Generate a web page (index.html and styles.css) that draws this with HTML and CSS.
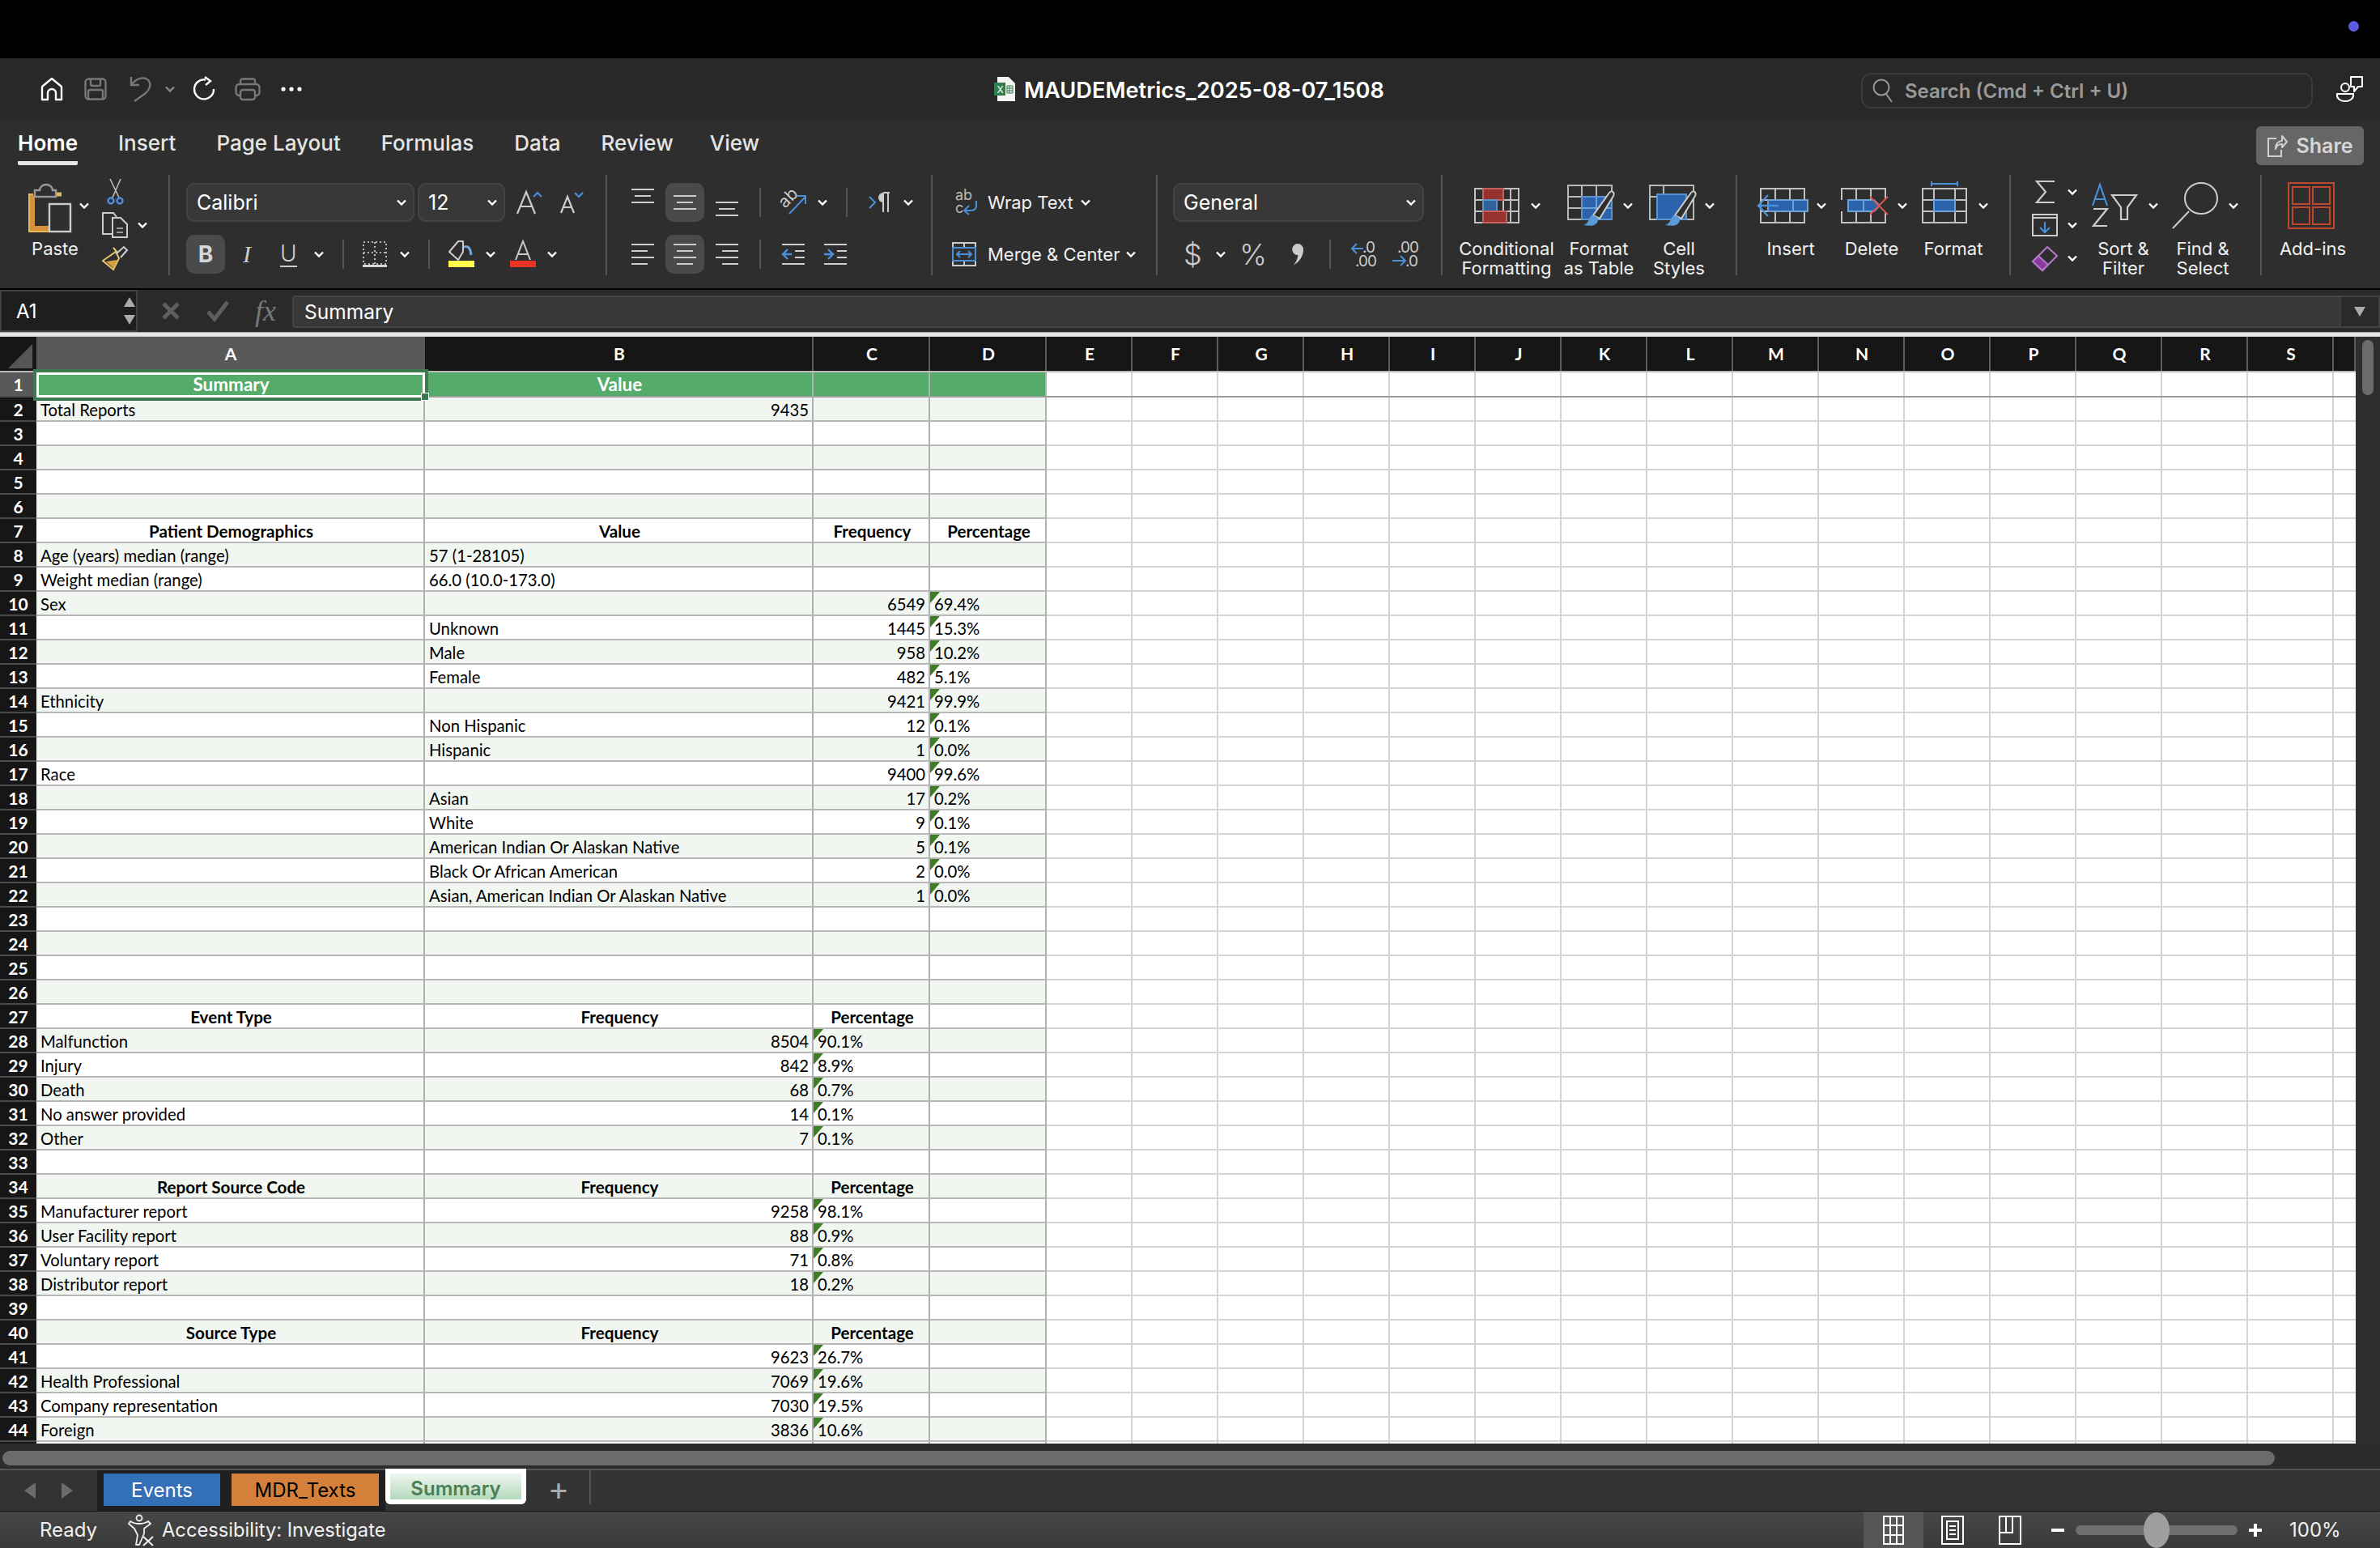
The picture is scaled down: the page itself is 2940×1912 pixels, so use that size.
FILE: index.html
```html
<!DOCTYPE html>
<html lang="en">
<head>
    <meta charset="UTF-8">
    <title>MAUDEMetrics_2025-08-07_1508</title>
    <link rel="stylesheet" href="styles.css">
</head>
<body>
    <svg class="sprite" width="0" height="0">
        <symbol id="chev" viewBox="0 0 12 8"><path d="M1 1.5 L6 6.5 L11 1.5" fill="none" stroke="#fff" stroke-width="2.4"/></symbol>
    </svg>

    <div class="topbar"><span class="dot"></span></div>

    <div class="titlebar">
        <div class="quick">
            <svg class="ml-50" width="28" height="30" viewBox="0 0 28 30"><path d="M2 28 V12 L14 2 L26 12 V28 H19 V20 a5 5 0 0 0 -10 0 V28 Z" fill="none" stroke="#fff" stroke-width="2.4" stroke-linejoin="round"/></svg>
            <svg class="ml-26" width="28" height="28" viewBox="0 0 28 28" fill="none" stroke="#777" stroke-width="2.4"><rect x="1.5" y="1.5" width="25" height="25" rx="4"/><path d="M8 2 V8 a2 2 0 0 0 2 2 H18 a2 2 0 0 0 2 -2 V2 M5 26 V17 a2 2 0 0 1 2 -2 H21 a2 2 0 0 1 2 2 V26"/></svg>
            <svg class="ml-28" width="28" height="32" viewBox="0 0 28 32" fill="none" stroke="#777" stroke-width="2.4"><path d="M2 1 V11 H12 M2 11 C8 3 18 -1 24 6 C28 12 24 17 20 21 L6 31"/></svg>
            <svg class="ml-16 chev-dim" width="12" height="8"><use href="#chev"/></svg>
            <svg class="ml-22" width="28" height="28" viewBox="0 0 28 28" fill="none" stroke="#fff" stroke-width="2.4"><path d="M26 14 A12 12 0 1 1 16 2.5 M15 -1 L22 4 L16 9"/></svg>
            <svg class="ml-24" width="32" height="28" viewBox="0 0 32 28" fill="none" stroke="#777" stroke-width="2.4"><path d="M7 8 V4 a2.5 2.5 0 0 1 2.5 -2.5 H22.5 a2.5 2.5 0 0 1 2.5 2.5 V8"/><rect x="1.5" y="8" width="29" height="14" rx="4"/><rect x="7" y="15" width="18" height="12" rx="3" fill="#282828"/></svg>
            <svg class="ml-25" width="26" height="6" viewBox="0 0 26 6" fill="#fff"><circle cx="3" cy="3" r="2.6"/><circle cx="13" cy="3" r="2.6"/><circle cx="23" cy="3" r="2.6"/></svg>
        </div>
        <svg width="26" height="30" viewBox="0 0 26 30"><path d="M4 0 H18 L26 8 V30 H4 Z" fill="#f4f4f4"/><rect x="0" y="7" width="14" height="16" fill="#2f7d4a"/><text x="3.5" y="20" class="xl-x">X</text><path d="M16 11 H23 V20 H16 Z M19 11 V20 M16 14 H23 M16 17 H23" fill="none" stroke="#2f7d4a" stroke-width="1"/></svg>
        <div class="doc-name">MAUDEMetrics_2025-08-07_1508</div>
        <div class="search">
            <svg width="26" height="30" viewBox="0 0 26 30" fill="none" stroke="#9a9a9a" stroke-width="2"><circle cx="11" cy="11" r="9.5"/><path d="M17 19 L24 29"/></svg>
            <span>Search (Cmd + Ctrl + U)</span>
        </div>
        <svg class="ml-29" width="34" height="32" viewBox="0 0 34 32" fill="none" stroke="#fff" stroke-width="2"><circle cx="11" cy="14" r="5"/><path d="M1 22 H21 V24 a10 7 0 0 1 -20 0 Z"/><path d="M18 1 H32 V13 H27 L22 19 V13 H18 Z" stroke-linejoin="round"/></svg>
    </div>

    <div class="ribbon">
        <div class="tabs">
            <span class="tab active">Home</span>
            <span class="tab">Insert</span>
            <span class="tab">Page Layout</span>
            <span class="tab">Formulas</span>
            <span class="tab">Data</span>
            <span class="tab">Review</span>
            <span class="tab tab-view">View</span>
            <div class="share">
                <svg width="26" height="30" viewBox="0 0 26 30" fill="none" stroke="#d0d0d0" stroke-width="2"><path d="M12 6 H2 V28 H18 V20"/><path d="M11 19 C11 12 15 9 19 9 V3 L25 10 L19 17 V13 C15 13 12 15 11 19 Z" stroke-linejoin="round"/></svg>
                <span>Share</span>
            </div>
        </div>
        <div class="groups">
            <!-- clipboard -->
            <div class="grp g-clip">
                <div class="big w-90 ml-23">
                    <div class="big-top">
                        <svg class="ml-11" width="54" height="64" viewBox="0 0 54 64" fill="none"><path d="M7 18 H2 V64 H26" stroke="#e9b75a" stroke-width="2"/><path d="M6 19 V60 H26" stroke="#d5903a" stroke-width="6"/><path d="M34 18 H42" stroke="#e9b75a" stroke-width="5"/><path d="M9 21 V13 H15 a8 7 0 0 1 16 0 H35 V21 Z" stroke="#999" stroke-width="2.4" fill="#2e2e2e"/><rect x="27" y="30" width="26" height="34" stroke="#ccc" stroke-width="2.4" fill="#2e2e2e"/></svg>
                        <svg class="ml-10" width="12" height="8"><use href="#chev"/></svg>
                    </div>
                    <div class="label">Paste</div>
                </div>
                <div class="stack">
                    <div class="s">
                        <svg class="ml-19" width="22" height="34" viewBox="0 0 22 34" fill="none" stroke="#bbb" stroke-width="1.6"><path d="M4 1 L15 24 M17 1 L7 24"/><circle cx="5" cy="28" r="3.5" stroke="#4a90d9" stroke-width="2.4"/><circle cx="16" cy="28" r="3.5" stroke="#4a90d9" stroke-width="2.4"/></svg>
                    </div>
                    <div class="s">
                        <svg class="ml-13" width="32" height="32" viewBox="0 0 32 32" fill="none" stroke="#ccc" stroke-width="2"><path d="M13 27 H1 V1 H14 L18 6"/><path d="M13 7 H23 L31 15 V31 H13 Z" fill="#2e2e2e"/><path d="M18 20 H26 M18 25 H26" stroke="#999"/></svg>
                        <svg class="ml-12" width="12" height="8"><use href="#chev"/></svg>
                    </div>
                    <div class="s">
                        <svg class="ml-13" width="32" height="30" viewBox="0 0 32 30" fill="none"><path d="M14 2 L19 8 M1 18 L17 7 L21 15 L14 29 Z" stroke="#e9c46a" stroke-width="2"/><path d="M5 19 L19 17 L14 27 Z" fill="#d5a040"/><path d="M18 9 L27 1 L31 5 L23 14" stroke="#ccc" stroke-width="2"/></svg>
                    </div>
                </div>
            </div>
            <!-- font -->
            <div class="grp g-font">
                <div class="r">
                    <div class="select ml-20 w-font"><span>Calibri</span><svg width="12" height="8"><use href="#chev"/></svg></div>
                    <div class="select ml-4 w-size"><span>12</span><svg width="12" height="8"><use href="#chev"/></svg></div>
                    <svg class="ml-14" width="32" height="30" viewBox="0 0 32 30" fill="none"><path d="M1 29 L12 2 L23 29 M5 20 H19" stroke="#ccc" stroke-width="2.2"/><path d="M21 8 L26 3 L31 8" stroke="#4a90d9" stroke-width="2.2"/></svg>
                    <svg class="ml-22" width="30" height="28" viewBox="0 0 30 28" fill="none"><path d="M1 27 L9 7 L17 27 M4 20 H14" stroke="#ccc" stroke-width="2.2"/><path d="M18 2 L23 7 L28 2" stroke="#4a90d9" stroke-width="2.2"/></svg>
                </div>
                <div class="r">
                    <div class="btn on ml-20 bold-b">B</div>
                    <span class="it-i ml-22">I</span>
                    <span class="un-u ml-34">U</span>
                    <svg class="ml-21" width="12" height="8"><use href="#chev"/></svg>
                    <span class="vsep ml-23"></span>
                    <svg class="ml-23" width="30" height="32" viewBox="0 0 30 32" fill="none"><rect x="1" y="1" width="28" height="27" stroke="#ddd" stroke-width="1.6" stroke-dasharray="2 3"/><path d="M15 1 V28 M1 14 H29" stroke="#ddd" stroke-width="1.6" stroke-dasharray="2 3"/><path d="M0 30.5 H30" stroke="#fff" stroke-width="2.4"/></svg>
                    <svg class="ml-16" width="12" height="8"><use href="#chev"/></svg>
                    <span class="vsep ml-23"></span>
                    <svg class="ml-23" width="32" height="34" viewBox="0 0 32 34" fill="none"><path d="M12 1 H18 V14 L12 24 L1 14 Z" stroke="#ccc" stroke-width="2" stroke-linejoin="round"/><path d="M19 8 C24 6 27 9 28 18" stroke="#6ea8dc" stroke-width="3"/><rect y="25" width="32" height="8" fill="#ffff4d"/></svg>
                    <svg class="ml-14" width="12" height="8"><use href="#chev"/></svg>
                    <svg class="ml-18" width="32" height="34" viewBox="0 0 32 34" fill="none"><path d="M7 24 L16 1 L25 24 M10 17 H22" stroke="#ccc" stroke-width="2"/><rect y="25" width="32" height="8" fill="#ea3323"/></svg>
                    <svg class="ml-14" width="12" height="8"><use href="#chev"/></svg>
                </div>
            </div>
            <!-- alignment -->
            <div class="grp g-align">
                <div class="r">
                    <svg class="ml-30 up" width="28" height="18" viewBox="0 0 28 18" stroke="#ccc" stroke-width="2"><path d="M0 1 H28 M4 9 H24 M0 17 H28"/></svg>
                    <div class="btn on ml-14"><svg width="28" height="18" viewBox="0 0 28 18" stroke="#ccc" stroke-width="2"><path d="M0 1 H28 M4 9 H24 M0 17 H28"/></svg></div>
                    <svg class="ml-14 down" width="28" height="18" viewBox="0 0 28 18" stroke="#ccc" stroke-width="2"><path d="M0 1 H28 M4 9 H24 M0 17 H28"/></svg>
                    <span class="vsep ml-26"></span>
                    <svg class="ml-24" width="32" height="32" viewBox="0 0 32 32" fill="none"><text x="0" y="18" class="ab" transform="rotate(-45 10 14)">ab</text><path d="M11 30 L30 10 M21 8 H31 V18" stroke="#4a90d9" stroke-width="2"/></svg>
                    <svg class="ml-14" width="12" height="8"><use href="#chev"/></svg>
                    <span class="vsep ml-23"></span>
                    <svg class="ml-26" width="26" height="30" viewBox="0 0 26 30" fill="none"><path d="M1 8 L8 15 L1 22" stroke="#4a90d9" stroke-width="2"/><path d="M18 3 H26 M18 3 V27 M24 3 V27" stroke="#ccc" stroke-width="2"/><path d="M18 3 a6 6 0 0 0 0 12 Z" fill="#ccc"/></svg>
                    <svg class="ml-17" width="12" height="8"><use href="#chev"/></svg>
                </div>
                <div class="r">
                    <svg class="ml-30" width="28" height="26" viewBox="0 0 28 26" stroke="#ccc" stroke-width="2"><path d="M0 1 H28 M0 9 H20 M0 17 H28 M0 25 H20"/></svg>
                    <div class="btn on ml-14"><svg width="28" height="26" viewBox="0 0 28 26" stroke="#ccc" stroke-width="2"><path d="M0 1 H28 M4 9 H24 M0 17 H28 M4 25 H24"/></svg></div>
                    <svg class="ml-14" width="28" height="26" viewBox="0 0 28 26" stroke="#ccc" stroke-width="2"><path d="M0 1 H28 M8 9 H28 M0 17 H28 M8 25 H28"/></svg>
                    <span class="vsep ml-26"></span>
                    <svg class="ml-26" width="28" height="26" viewBox="0 0 28 26" fill="none" stroke="#ccc" stroke-width="2"><path d="M0 1 H28 M16 9 H28 M16 17 H28 M0 25 H28"/><path d="M12 13 H1 M7 7 L1 13 L7 19" stroke="#4a90d9" stroke-width="2.4"/></svg>
                    <svg class="ml-24" width="28" height="26" viewBox="0 0 28 26" fill="none" stroke="#ccc" stroke-width="2"><path d="M0 1 H28 M16 9 H28 M16 17 H28 M0 25 H28"/><path d="M0 13 H11 M5 7 L11 13 L5 19" stroke="#4a90d9" stroke-width="2.4"/></svg>
                </div>
            </div>
            <!-- wrap / merge -->
            <div class="grp g-wrap">
                <div class="r">
                    <svg class="ml-28" width="28" height="32" viewBox="0 0 28 32" fill="none"><text x="0" y="13" class="wrap-t">ab</text><text x="0" y="29" class="wrap-t">c</text><path d="M26 14 V20 a6 6 0 0 1 -6 6 H12 M17 20 L11 26 L17 31" stroke="#4a90d9" stroke-width="2"/></svg>
                    <span class="txt ml-12">Wrap Text</span>
                    <svg class="ml-9" width="12" height="8"><use href="#chev"/></svg>
                </div>
                <div class="r">
                    <svg class="ml-24" width="30" height="30" viewBox="0 0 30 30" fill="none" stroke="#ccc" stroke-width="2"><path d="M1 7 V1 H29 V7 M1 23 V29 H29 V23 M15 1 V7 M15 23 V29"/><rect x="1" y="7" width="28" height="16" stroke="#4a90d9"/><path d="M6 15 H24 M10 11 L6 15 L10 19 M20 11 L24 15 L20 19" stroke="#4a90d9"/></svg>
                    <span class="txt ml-14">Merge &amp; Center</span>
                    <svg class="ml-8" width="12" height="8"><use href="#chev"/></svg>
                </div>
            </div>
            <!-- number -->
            <div class="grp g-num">
                <div class="r">
                    <div class="select ml-19 w-num"><span>General</span><svg width="12" height="8"><use href="#chev"/></svg></div>
                </div>
                <div class="r">
                    <span class="sym sym-d ml-32">$</span>
                    <svg class="ml-22" width="12" height="8"><use href="#chev"/></svg>
                    <span class="sym sym-p ml-17">%</span>
                    <svg class="ml-30" width="16" height="28" viewBox="0 0 16 28"><path d="M8 1 a7 7 0 0 1 7 7.5 c0 8 -5 15 -12 19 c3 -4 5 -8 5.500 -12.500 a7 7 0 0 1 -0.500 -14 Z" fill="#ccc"/></svg>
                    <span class="vsep ml-31"></span>
                    <svg class="ml-24" width="32" height="34" viewBox="0 0 32 34" fill="none"><text x="15" y="15" class="dec">.0</text><text x="6" y="32" class="dec">.00</text><path d="M16 10 H2 M8 4 L2 10 L8 16" stroke="#4a90d9" stroke-width="2"/></svg>
                    <svg class="ml-20" width="32" height="34" viewBox="0 0 32 34" fill="none"><text x="6" y="15" class="dec">.00</text><text x="16" y="32" class="dec">.0</text><path d="M0 25 H15 M10 19 L16 25 L10 31" stroke="#4a90d9" stroke-width="2"/></svg>
                </div>
            </div>
            <!-- styles -->
            <div class="grp g-tools g-styles">
                <div class="big w-120 ml-19">
                    <div class="big-top">
                        <svg class="ml-20" width="56" height="44" viewBox="0 0 56 44" fill="none"><path d="M1 1 H55 V43 H1 Z M1 15 H55 M1 29 H55 M11 1 V43 M25 1 V43 M36 1 V43 M45 1 V43" stroke="#c0c0c0" stroke-width="2"/><rect x="11" y="1" width="25" height="14" fill="#953330" stroke="#c9605c" stroke-width="2"/><rect x="11" y="15" width="17" height="14" fill="#2f639c" stroke="#5b93cc" stroke-width="2"/><rect x="11" y="29" width="29" height="14" fill="#953330" stroke="#c9605c" stroke-width="2"/></svg>
                        <svg class="ml-14" width="12" height="8"><use href="#chev"/></svg>
                    </div>
                    <div class="label">Conditional<br>Formatting</div>
                </div>
                <div class="big w-90 ml-9">
                    <div class="big-top">
                        <svg class="ml-6" width="60" height="52" viewBox="0 0 60 52" fill="none"><path d="M1 1 H55 V43 H1 Z M1 15 H55 M1 29 H55 M18 1 V43 M36 1 V43" stroke="#b8b8b8" stroke-width="2"/><rect x="18" y="15" width="37" height="28" fill="#2c63ad" stroke="#5b93cc" stroke-width="2"/><path d="M36 15 V43 M18 29 H55" stroke="#6da2d8" stroke-width="2"/><path d="M32 38 L52 10 C55 6 59 10 57 14 L40 42 Z" fill="#2e2e2e" stroke="#ccc" stroke-width="2"/><path d="M30 38 C36 38 40 42 37 47 C34 52 26 51 20 50 C27 48 26 42 30 38 Z" fill="#5a9ada"/></svg>
                        <svg class="ml-9" width="12" height="8"><use href="#chev"/></svg>
                    </div>
                    <div class="label">Format<br>as Table</div>
                </div>
                <div class="big w-90 ml-9">
                    <div class="big-top">
                        <svg class="ml-8" width="60" height="52" viewBox="0 0 60 52" fill="none"><path d="M1 1 H55 V43 H1 Z M1 15 H55 M18 1 V43" stroke="#b8b8b8" stroke-width="2"/><rect x="10" y="12" width="36" height="31" fill="#2c63ad" stroke="#5b93cc" stroke-width="2"/><path d="M32 38 L52 10 C55 6 59 10 57 14 L40 42 Z" fill="#2e2e2e" stroke="#ccc" stroke-width="2"/><path d="M30 38 C36 38 40 42 37 47 C34 52 26 51 20 50 C27 48 26 42 30 38 Z" fill="#5a9ada"/></svg>
                        <svg class="ml-9" width="12" height="8"><use href="#chev"/></svg>
                    </div>
                    <div class="label">Cell<br>Styles</div>
                </div>
            </div>
            <!-- cells -->
            <div class="grp g-tools g-cells">
                <div class="big w-90 ml-21">
                    <div class="big-top">
                        <svg class="ml-3" width="64" height="44" viewBox="0 0 64 44" fill="none"><path d="M5 1 H59 V43 H5 Z M5 15 H59 M5 29 H59 M23 1 V43 M41 1 V43" stroke="#c0c0c0" stroke-width="2"/><rect x="14" y="15" width="49" height="14" fill="#2c63ad" stroke="#6da2d8" stroke-width="2"/><path d="M45 15 V29" stroke="#6da2d8" stroke-width="2"/><path d="M27 22 H2 M14 9 L2 22 L14 35" stroke="#4a90d9" stroke-width="2.4"/></svg>
                        <svg class="ml-10" width="12" height="8"><use href="#chev"/></svg>
                    </div>
                    <div class="label">Insert</div>
                </div>
                <div class="big w-90 ml-10">
                    <div class="big-top">
                        <svg class="ml-7" width="60" height="44" viewBox="0 0 60 44" fill="none"><path d="M1 15 V1 H55 V15 M1 29 V43 H55 V29 M19 1 V15 M19 29 V43 M37 1 V15 M37 29 V43" stroke="#c0c0c0" stroke-width="2"/><path d="M9 15 H41 L48 22 L41 29 H9 Z" fill="#2c63ad" stroke="#6da2d8" stroke-width="2"/><path d="M28 15 V29" stroke="#6da2d8" stroke-width="2"/><path d="M36 11 L58 33 M58 11 L36 33" stroke="#d9534f" stroke-width="2"/></svg>
                        <svg class="ml-10" width="12" height="8"><use href="#chev"/></svg>
                    </div>
                    <div class="label">Delete</div>
                </div>
                <div class="big w-90 ml-11">
                    <div class="big-top">
                        <svg class="ml-6" width="56" height="64" viewBox="0 0 56 64" fill="none"><path d="M12 2 V8 M44 2 V8 M12 5 H44" stroke="#4a90d9" stroke-width="2"/><path d="M1 11 H55 V53 H1 Z M1 25 H55 M1 39 H55 M15 11 V53 M41 11 V53" stroke="#c0c0c0" stroke-width="2"/><rect x="15" y="25" width="26" height="14" fill="#2c63ad" stroke="#6da2d8" stroke-width="2"/></svg>
                        <svg class="ml-14" width="12" height="8"><use href="#chev"/></svg>
                    </div>
                    <div class="label">Format</div>
                </div>
            </div>
            <!-- editing -->
            <div class="grp g-tools g-edit">
                <div class="stack stack-edit">
                    <div class="s">
                        <svg class="ml-30" width="24" height="28" viewBox="0 0 24 28" fill="none" stroke="#ccc" stroke-width="2.2"><path d="M24 1 H2 L13 14 L2 27 H24"/></svg>
                        <svg class="ml-16" width="12" height="8"><use href="#chev"/></svg>
                    </div>
                    <div class="s">
                        <svg class="ml-26" width="32" height="28" viewBox="0 0 32 28" fill="none" stroke="#ccc" stroke-width="2"><rect x="1" y="1" width="30" height="26"/><path d="M1 5 H31"/><path d="M16 10 V23 M10 17 L16 23 L22 17" stroke="#4a90d9"/></svg>
                        <svg class="ml-12" width="12" height="8"><use href="#chev"/></svg>
                    </div>
                    <div class="s">
                        <svg class="ml-26" width="32" height="32" viewBox="0 0 32 32" fill="none"><path d="M1 20 L19 2 L31 13 L13 31 Z" stroke="#b477c9" stroke-width="2"/><path d="M1 20 L8 13 L20 24 L13 31 Z" fill="#8a3a9e" stroke="#b477c9" stroke-width="2"/></svg>
                        <svg class="ml-12" width="12" height="8"><use href="#chev"/></svg>
                    </div>
                </div>
                <div class="big w-90 ml-8">
                    <div class="big-top">
                        <svg class="ml-6" width="56" height="54" viewBox="0 0 56 54" fill="none"><path d="M1 27 L10 1 L19 27 M4 19 H16" stroke="#4a90d9" stroke-width="2.2"/><path d="M2 31 H19 L2 52 H19" stroke="#ccc" stroke-width="2.2"/><path d="M25 14 H55 L44 29 V44 H36 V29 Z" stroke="#ccc" stroke-width="2.2"/></svg>
                        <svg class="ml-14" width="12" height="8"><use href="#chev"/></svg>
                    </div>
                    <div class="label">Sort &amp;<br>Filter</div>
                </div>
                <div class="big w-90 ml-8">
                    <div class="big-top">
                        <svg class="ml-6" width="58" height="58" viewBox="0 0 58 58" fill="none" stroke="#ccc" stroke-width="2"><ellipse cx="37" cy="20" rx="20" ry="19"/><path d="M22 36 L2 57"/></svg>
                        <svg class="ml-13" width="12" height="8"><use href="#chev"/></svg>
                    </div>
                    <div class="label">Find &amp;<br>Select</div>
                </div>
            </div>
            <!-- add-ins -->
            <div class="grp-last">
                <div class="big w-100 ml-13">
                    <div class="big-top">
                        <svg class="ml-19" width="58" height="58" viewBox="0 0 58 58" fill="none" stroke="#c2452d" stroke-width="2"><rect x="1" y="1" width="56" height="56"/><rect x="6" y="6" width="21" height="21"/><rect x="31" y="6" width="21" height="21"/><rect x="6" y="31" width="21" height="21"/><rect x="31" y="31" width="21" height="21"/></svg>
                    </div>
                    <div class="label">Add-ins</div>
                </div>
            </div>
        </div>
    </div>

    <div class="blackline"></div>

    <div class="formulabar">
        <div class="namebox">
            <span>A1</span>
            <div class="stepper"><i class="tri-up"></i><i class="tri-down"></i></div>
        </div>
        <svg class="ml-30" width="22" height="22" viewBox="0 0 22 22" stroke="#5e5e5e" stroke-width="5"><path d="M2 2 L20 20 M20 2 L2 20"/></svg>
        <svg class="ml-33" width="28" height="26" viewBox="0 0 28 26" fill="none" stroke="#5e5e5e" stroke-width="5"><path d="M2 14 L10 23 L26 2"/></svg>
        <span class="fx ml-32">fx</span>
        <div class="finput"><span>Summary</span><div class="fdrop"><i class="tri-down"></i></div></div>
    </div>

    <div class="hairline"></div>

    <div class="workarea">
        <div class="sheet">
            <div class="colhead">
                <span class="corner"><i></i></span>
                <span class="ch sel">A</span><span class="ch">B</span><span class="ch">C</span><span class="ch">D</span>
                <span class="ch">E</span><span class="ch">F</span><span class="ch">G</span><span class="ch">H</span><span class="ch">I</span><span class="ch">J</span><span class="ch">K</span><span class="ch">L</span><span class="ch">M</span><span class="ch">N</span><span class="ch">O</span><span class="ch">P</span><span class="ch">Q</span><span class="ch">R</span><span class="ch">S</span><span class="ch"></span>
            </div>
            <div class="row first"><span class="rh sel">1</span><span class="cell hd active">Summary<i class="handle"></i></span><span class="cell hd">Value</span><span class="cell hd"></span><span class="cell hd"></span><span class="rest"></span></div>
            <div class="row alt"><span class="rh">2</span><span class="cell">Total Reports</span><span class="cell num">9435</span><span class="cell"></span><span class="cell"></span><span class="rest"></span></div>
            <div class="row"><span class="rh">3</span><span class="cell"></span><span class="cell"></span><span class="cell"></span><span class="cell"></span><span class="rest"></span></div>
            <div class="row alt"><span class="rh">4</span><span class="cell"></span><span class="cell"></span><span class="cell"></span><span class="cell"></span><span class="rest"></span></div>
            <div class="row"><span class="rh">5</span><span class="cell"></span><span class="cell"></span><span class="cell"></span><span class="cell"></span><span class="rest"></span></div>
            <div class="row alt"><span class="rh">6</span><span class="cell"></span><span class="cell"></span><span class="cell"></span><span class="cell"></span><span class="rest"></span></div>
            <div class="row"><span class="rh">7</span><span class="cell b">Patient Demographics</span><span class="cell b">Value</span><span class="cell b">Frequency</span><span class="cell b">Percentage</span><span class="rest"></span></div>
            <div class="row alt"><span class="rh">8</span><span class="cell">Age (years) median (range)</span><span class="cell">57 (1-28105)</span><span class="cell"></span><span class="cell"></span><span class="rest"></span></div>
            <div class="row"><span class="rh">9</span><span class="cell">Weight median (range)</span><span class="cell">66.0 (10.0-173.0)</span><span class="cell"></span><span class="cell"></span><span class="rest"></span></div>
            <div class="row alt"><span class="rh">10</span><span class="cell">Sex</span><span class="cell"></span><span class="cell num">6549</span><span class="cell flag">69.4%</span><span class="rest"></span></div>
            <div class="row"><span class="rh">11</span><span class="cell"></span><span class="cell">Unknown</span><span class="cell num">1445</span><span class="cell flag">15.3%</span><span class="rest"></span></div>
            <div class="row alt"><span class="rh">12</span><span class="cell"></span><span class="cell">Male</span><span class="cell num">958</span><span class="cell flag">10.2%</span><span class="rest"></span></div>
            <div class="row"><span class="rh">13</span><span class="cell"></span><span class="cell">Female</span><span class="cell num">482</span><span class="cell flag">5.1%</span><span class="rest"></span></div>
            <div class="row alt"><span class="rh">14</span><span class="cell">Ethnicity</span><span class="cell"></span><span class="cell num">9421</span><span class="cell flag">99.9%</span><span class="rest"></span></div>
            <div class="row"><span class="rh">15</span><span class="cell"></span><span class="cell">Non Hispanic</span><span class="cell num">12</span><span class="cell flag">0.1%</span><span class="rest"></span></div>
            <div class="row alt"><span class="rh">16</span><span class="cell"></span><span class="cell">Hispanic</span><span class="cell num">1</span><span class="cell flag">0.0%</span><span class="rest"></span></div>
            <div class="row"><span class="rh">17</span><span class="cell">Race</span><span class="cell"></span><span class="cell num">9400</span><span class="cell flag">99.6%</span><span class="rest"></span></div>
            <div class="row alt"><span class="rh">18</span><span class="cell"></span><span class="cell">Asian</span><span class="cell num">17</span><span class="cell flag">0.2%</span><span class="rest"></span></div>
            <div class="row"><span class="rh">19</span><span class="cell"></span><span class="cell">White</span><span class="cell num">9</span><span class="cell flag">0.1%</span><span class="rest"></span></div>
            <div class="row alt"><span class="rh">20</span><span class="cell"></span><span class="cell">American Indian Or Alaskan Native</span><span class="cell num">5</span><span class="cell flag">0.1%</span><span class="rest"></span></div>
            <div class="row"><span class="rh">21</span><span class="cell"></span><span class="cell">Black Or African American</span><span class="cell num">2</span><span class="cell flag">0.0%</span><span class="rest"></span></div>
            <div class="row alt"><span class="rh">22</span><span class="cell"></span><span class="cell">Asian, American Indian Or Alaskan Native</span><span class="cell num">1</span><span class="cell flag">0.0%</span><span class="rest"></span></div>
            <div class="row"><span class="rh">23</span><span class="cell"></span><span class="cell"></span><span class="cell"></span><span class="cell"></span><span class="rest"></span></div>
            <div class="row alt"><span class="rh">24</span><span class="cell"></span><span class="cell"></span><span class="cell"></span><span class="cell"></span><span class="rest"></span></div>
            <div class="row"><span class="rh">25</span><span class="cell"></span><span class="cell"></span><span class="cell"></span><span class="cell"></span><span class="rest"></span></div>
            <div class="row alt"><span class="rh">26</span><span class="cell"></span><span class="cell"></span><span class="cell"></span><span class="cell"></span><span class="rest"></span></div>
            <div class="row"><span class="rh">27</span><span class="cell b">Event Type</span><span class="cell b">Frequency</span><span class="cell b">Percentage</span><span class="cell"></span><span class="rest"></span></div>
            <div class="row alt"><span class="rh">28</span><span class="cell">Malfunction</span><span class="cell num">8504</span><span class="cell flag">90.1%</span><span class="cell"></span><span class="rest"></span></div>
            <div class="row"><span class="rh">29</span><span class="cell">Injury</span><span class="cell num">842</span><span class="cell flag">8.9%</span><span class="cell"></span><span class="rest"></span></div>
            <div class="row alt"><span class="rh">30</span><span class="cell">Death</span><span class="cell num">68</span><span class="cell flag">0.7%</span><span class="cell"></span><span class="rest"></span></div>
            <div class="row"><span class="rh">31</span><span class="cell">No answer provided</span><span class="cell num">14</span><span class="cell flag">0.1%</span><span class="cell"></span><span class="rest"></span></div>
            <div class="row alt"><span class="rh">32</span><span class="cell">Other</span><span class="cell num">7</span><span class="cell flag">0.1%</span><span class="cell"></span><span class="rest"></span></div>
            <div class="row"><span class="rh">33</span><span class="cell"></span><span class="cell"></span><span class="cell"></span><span class="cell"></span><span class="rest"></span></div>
            <div class="row alt"><span class="rh">34</span><span class="cell b">Report Source Code</span><span class="cell b">Frequency</span><span class="cell b">Percentage</span><span class="cell"></span><span class="rest"></span></div>
            <div class="row"><span class="rh">35</span><span class="cell">Manufacturer report</span><span class="cell num">9258</span><span class="cell flag">98.1%</span><span class="cell"></span><span class="rest"></span></div>
            <div class="row alt"><span class="rh">36</span><span class="cell">User Facility report</span><span class="cell num">88</span><span class="cell flag">0.9%</span><span class="cell"></span><span class="rest"></span></div>
            <div class="row"><span class="rh">37</span><span class="cell">Voluntary report</span><span class="cell num">71</span><span class="cell flag">0.8%</span><span class="cell"></span><span class="rest"></span></div>
            <div class="row alt"><span class="rh">38</span><span class="cell">Distributor report</span><span class="cell num">18</span><span class="cell flag">0.2%</span><span class="cell"></span><span class="rest"></span></div>
            <div class="row"><span class="rh">39</span><span class="cell"></span><span class="cell"></span><span class="cell"></span><span class="cell"></span><span class="rest"></span></div>
            <div class="row alt"><span class="rh">40</span><span class="cell b">Source Type</span><span class="cell b">Frequency</span><span class="cell b">Percentage</span><span class="cell"></span><span class="rest"></span></div>
            <div class="row"><span class="rh">41</span><span class="cell"></span><span class="cell num">9623</span><span class="cell flag">26.7%</span><span class="cell"></span><span class="rest"></span></div>
            <div class="row alt"><span class="rh">42</span><span class="cell">Health Professional</span><span class="cell num">7069</span><span class="cell flag">19.6%</span><span class="cell"></span><span class="rest"></span></div>
            <div class="row"><span class="rh">43</span><span class="cell">Company representation</span><span class="cell num">7030</span><span class="cell flag">19.5%</span><span class="cell"></span><span class="rest"></span></div>
            <div class="row alt"><span class="rh">44</span><span class="cell">Foreign</span><span class="cell num">3836</span><span class="cell flag">10.6%</span><span class="cell"></span><span class="rest"></span></div>
            <div class="row"><span class="rh"></span><span class="cell"></span><span class="cell"></span><span class="cell"></span><span class="cell"></span><span class="rest"></span></div>
        </div>
        <div class="vscroll"><div class="vthumb"></div></div>
    </div>

    <div class="hscroll"><div class="hthumb"></div></div>

    <div class="sheetbar">
        <i class="nav-l"></i><i class="nav-r"></i>
        <span class="navsep"></span>
        <div class="sheettabs">
            <span class="stab events">Events</span>
            <span class="stab mdr">MDR_Texts</span>
        </div>
        <span class="stab current"><b>Summary</b></span>
        <span class="addsheet">+</span>
        <span class="navsep"></span>
    </div>

    <div class="statusbar">
        <span class="ready">Ready</span>
        <svg class="ml-40" width="32" height="40" viewBox="0 0 32 40" fill="none" stroke="#eee" stroke-width="1.8"><circle cx="14" cy="5" r="3.5"/><path d="M3 9 C9 13 19 13 25 9 L28 12 L20 18 V24 L14 38 L10 38 L12 26 L8 18 L1 12 Z" stroke-linejoin="round"/><path d="M19 28 L31 39 M31 28 L19 39" stroke-width="2"/></svg>
        <span class="acc">Accessibility: Investigate</span>
        <div class="views">
            <div class="view on"><svg width="26" height="36" viewBox="0 0 26 36" fill="none" stroke="#fff" stroke-width="2"><path d="M1 1 H25 V35 H1 Z M1 12 H25 M1 24 H25 M9 1 V35 M17 1 V35"/></svg></div>
            <div class="view"><svg width="28" height="36" viewBox="0 0 28 36" fill="none" stroke="#fff" stroke-width="2"><rect x="1" y="1" width="26" height="34"/><rect x="7" y="7" width="14" height="22"/><path d="M10 13 H18 M10 18 H18 M10 23 H18"/></svg></div>
            <div class="view"><svg width="28" height="36" viewBox="0 0 28 36" fill="none" stroke="#fff" stroke-width="2"><rect x="1" y="1" width="26" height="34"/><path d="M1 21 H17 V1 M9 1 V21"/></svg></div>
        </div>
        <svg class="ml-16" width="16" height="4"><rect width="16" height="4" fill="#fff"/></svg>
        <div class="zoomtrack"><div class="knob"></div></div>
        <svg class="ml-14" width="16" height="16" viewBox="0 0 16 16" fill="#fff"><path d="M6 0 H10 V6 H16 V10 H10 V16 H6 V10 H0 V6 H6 Z"/></svg>
        <span class="pct">100%</span>
    </div>
</body>
</html>
```

FILE: styles.css
```css
* { box-sizing: border-box; }
html, body { margin: 0; padding: 0; }
body {
    width: 2940px;
    height: 1912px;
    overflow: hidden;
    background: #000;
    color: #fff;
    font-family: Inter, "Noto Sans", sans-serif;
    display: flex;
    flex-direction: column;
}
svg { flex: none; display: block; overflow: visible; }
.sprite { position: absolute; }

/* margins used to space the ribbon tools */
.ml-3 { margin-left: 3px; } .ml-4 { margin-left: 4px; } .ml-6 { margin-left: 6px; } .ml-7 { margin-left: 7px; }
.ml-8 { margin-left: 8px; } .ml-9 { margin-left: 9px; } .ml-10 { margin-left: 10px; } .ml-11 { margin-left: 11px; }
.ml-12 { margin-left: 12px; } .ml-13 { margin-left: 13px; } .ml-14 { margin-left: 14px; } .ml-16 { margin-left: 16px; }
.ml-17 { margin-left: 17px; } .ml-18 { margin-left: 18px; } .ml-19 { margin-left: 19px; } .ml-20 { margin-left: 20px; }
.ml-21 { margin-left: 21px; } .ml-22 { margin-left: 22px; } .ml-23 { margin-left: 23px; } .ml-24 { margin-left: 24px; }
.ml-25 { margin-left: 25px; } .ml-26 { margin-left: 26px; } .ml-28 { margin-left: 28px; } .ml-29 { margin-left: 29px; }
.ml-30 { margin-left: 30px; } .ml-31 { margin-left: 31px; } .ml-32 { margin-left: 32px; } .ml-33 { margin-left: 33px; }
.ml-34 { margin-left: 34px; } .ml-40 { margin-left: 40px; } .ml-50 { margin-left: 50px; }

.topbar { height: 72px; background: #000; position: relative; }
.dot {
    position: absolute;
    left: 2901px;
    top: 26px;
    width: 13px;
    height: 13px;
    border-radius: 50%;
    background: #5b5ce6;
}

/* title bar */
.titlebar {
    height: 76px;
    background: #282828;
    display: flex;
    align-items: center;
}
.quick { width: 1228px; display: flex; align-items: center; flex: none; }
.chev-dim { opacity: 0.45; }
.doc-name {
    margin-left: 11px;
    margin-top: 2px;
    width: 1008px;
    font-size: 27.2px;
    font-weight: 600;
    white-space: nowrap;
}
.search {
    margin-left: 26px;
    margin-top: 3px;
    width: 558px;
    height: 44px;
    border: 2px solid #3a3a3a;
    border-radius: 12px;
    display: flex;
    align-items: center;
    padding-left: 12px;
    gap: 14px;
    color: #9a9a9a;
    font-size: 24px;
    font-weight: 600;
}
.search span { padding-top: 2px; }

/* ribbon */
.ribbon { height: 208px; background: #2e2e2e; }
.tabs {
    height: 68px;
    padding-left: 22px;
    display: flex;
    align-items: flex-start;
    gap: 50px;
    position: relative;
}
.tab {
    margin-top: 12px;
    font-size: 26px;
    line-height: 34px;
    color: #e4e4e4;
    font-weight: 500;
    height: 44px;
    white-space: nowrap;
}
.tab.active {
    color: #fff;
    font-weight: 600;
    border-bottom: 5px solid #e6e6e6;
    border-radius: 0 0 2px 2px;
}
.tab-view { margin-left: -5px; }
.share {
    position: absolute;
    left: 2787px;
    top: 8px;
    width: 133px;
    height: 48px;
    background: #666;
    border-radius: 6px;
    display: flex;
    align-items: center;
    justify-content: center;
    gap: 10px;
    color: #d6d6d6;
    font-size: 25px;
    font-weight: 600;
}
.groups { display: flex; height: 124px; }
.grp {
    height: 124px;
    border-right: 2px solid #555;
    padding-top: 10px;
    display: flex;
    flex-direction: column;
    gap: 16px;
    flex: none;
}
.g-clip { width: 210px; flex-direction: row; padding-top: 0; gap: 0; }
.g-font { width: 540px; }
.g-align { width: 402px; }
.g-wrap { width: 278px; }
.g-num { width: 352px; }
.g-tools { flex-direction: row; padding-top: 0; gap: 0; }
.g-styles { width: 364px; }
.g-cells { width: 338px; }
.g-edit { width: 310px; }
.grp-last { display: flex; }
.r { display: flex; align-items: center; height: 48px; }
.up { margin-bottom: 16px; }
.down { margin-top: 16px; }
.big { display: flex; flex-direction: column; align-items: stretch; flex: none; }
.big-top { height: 76px; flex: none; display: flex; align-items: center; }
.w-90 { width: 90px; }
.w-100 { width: 100px; }
.w-120 { width: 120px; }
.label {
    margin-top: 3px;
    font-size: 22px;
    line-height: 24px;
    text-align: center;
    white-space: nowrap;
    color: #f0f0f0;
}
.stack { display: flex; flex-direction: column; }
.stack-edit { width: 86px; }
.s { height: 44px; display: flex; align-items: center; }
.select {
    height: 48px;
    background: #383838;
    border: 2px solid #444;
    border-radius: 10px;
    display: flex;
    align-items: center;
    justify-content: space-between;
    padding: 0 8px 0 11px;
    font-size: 25px;
    flex: none;
}
.w-font { width: 282px; }
.w-size { width: 108px; }
.w-num { width: 310px; }
.btn {
    width: 48px;
    height: 48px;
    border-radius: 10px;
    display: flex;
    align-items: center;
    justify-content: center;
    flex: none;
}
.btn.on { background: #4a4a4a; }
.bold-b { font-size: 28px; font-weight: 700; color: #d6d6d6; }
.it-i { font-family: "Liberation Serif", serif; font-style: italic; font-size: 30px; color: #ccc; width: 12px; }
.un-u { font-size: 28px; font-weight: 300; color: #ccc; border-bottom: 2px solid #ccc; line-height: 30px; }
.vsep { width: 2px; height: 36px; background: #555; flex: none; }
.txt { font-size: 22px; color: #f0f0f0; white-space: nowrap; }
.sym { color: #ccc; font-weight: 300; text-align: center; flex: none; }
.sym-d { font-size: 36px; width: 18px; }
.sym-p { font-size: 36px; width: 34px; }
svg text { font-family: Inter, sans-serif; }
.xl-x { font-size: 12px; fill: #fff; }
.ab { font-size: 21px; fill: #ccc; }
.wrap-t { font-size: 18px; fill: #bbb; }
.dec { font-size: 19px; fill: #ccc; letter-spacing: -1px; }

.blackline { height: 2px; background: #000; }

/* formula bar */
.formulabar {
    height: 52px;
    background: #2a2a2a;
    display: flex;
    align-items: center;
}
.namebox {
    width: 170px;
    height: 52px;
    background: #1e1e1e;
    border: 2px solid #414141;
    display: flex;
    align-items: center;
    justify-content: space-between;
    padding: 0 1px 0 18px;
    font-size: 24px;
    flex: none;
}
.stepper { display: flex; flex-direction: column; gap: 10px; align-items: center; }
.tri-up, .tri-down { display: block; width: 0; height: 0; border-left: 7px solid transparent; border-right: 7px solid transparent; }
.tri-up { border-bottom: 12px solid #aaa; }
.tri-down { border-top: 12px solid #aaa; }
.fx {
    font-family: "Liberation Serif", serif;
    font-style: italic;
    font-size: 36px;
    color: #777;
    width: 30px;
    flex: none;
}
.finput {
    margin-left: 16px;
    flex: 1;
    height: 40px;
    margin-top: 2px;
    background: #383838;
    border: 2px solid #444;
    border-radius: 4px 0 0 4px;
    display: flex;
    align-items: center;
    justify-content: space-between;
    padding-left: 13px;
    font-size: 24.5px;
}
.fdrop {
    width: 48px;
    height: 36px;
    background: #2a2a2a;
    border-left: 2px solid #3d3d3d;
    display: flex;
    align-items: center;
    justify-content: center;
}
.hairline { height: 6px; border-top: 1px solid #aaa; border-bottom: 1px solid #ccc; background: #e6e6e6; }

/* sheet */
.workarea { height: 1367px; display: flex; background: #2e2e2e; }
.sheet { width: 2910px; overflow: hidden; background: #fff; font-family: Lato, "Liberation Sans", sans-serif; color: #000; }
.colhead {
    height: 42px;
    background: #161616;
    display: grid;
    grid-template-columns: 45px 480px 480px 144px 144px repeat(15, 106px) 1fr;
}
.corner { position: relative; background: #161616; }
.corner i {
    position: absolute;
    left: 10px;
    bottom: 3px;
    width: 0;
    height: 0;
    border-left: 30px solid transparent;
    border-bottom: 30px solid #555;
}
.ch {
    color: #fff;
    font-size: 21px;
    font-weight: 700;
    text-align: center;
    line-height: 42px;
    padding-left: 2px;
    border-right: 2px solid #5a5a5a;
}
.ch.sel { background: #595959; }
.row {
    display: grid;
    grid-template-columns: 45px 480px 480px 144px 144px 1fr;
    grid-template-rows: 30px;
    height: 30px;
}
.row.first { height: 33px; grid-template-rows: 31px; border-top: 2px solid #b8b8b8; }
.rh {
    background: #161616;
    color: #fff;
    font-size: 21px;
    font-weight: 700;
    text-align: center;
    line-height: 30px;
    border-bottom: 2px solid #4a4a4a;
}
.rh.sel { background: #595959; }
.cell {
    position: relative;
    background: #fff;
    border-right: 2px solid #b0b0b0;
    border-bottom: 2px solid #b8b8b8;
    font-size: 20.3px;
    line-height: 30px;
    padding: 0 2px 0 5px;
    white-space: nowrap;
    overflow: visible;
}
.alt .cell { background: #f1f6f0; }
.cell.b { font-weight: 700; font-size: 20.6px; text-align: center; }
.cell.num { text-align: right; padding-right: 4px; }
.cell.hd {
    background: #55ab6a;
    color: #fff;
    font-weight: 700;
    font-size: 22.5px;
    text-align: center;
    border-bottom-color: #9c9c9c;
}
.cell.active { outline: 3px solid #fff; outline-offset: -3px; box-shadow: 0 0 0 4px #3a7a4e; z-index: 2; }
.handle {
    position: absolute;
    right: -7px;
    bottom: -6px;
    width: 10px;
    height: 10px;
    background: #3a7a4e;
    border: 1px solid #fff;
}
.cell.flag::before {
    content: "";
    position: absolute;
    left: 0;
    top: 0;
    width: 0;
    height: 0;
    border-top: 14px solid #3d7d25;
    border-right: 12px solid transparent;
}
.rest {
    border-bottom: 2px solid #d4d4d4;
    background: repeating-linear-gradient(to right, #fff 0, #fff 104px, #d4d4d4 104px, #d4d4d4 106px);
}
.row.first .rest { border-bottom-color: #9c9c9c; }
.vscroll { flex: 1; padding: 4px 8px; }
.vthumb { height: 68px; background: #6b6b6b; border-radius: 8px; }

.hscroll {
    height: 33px;
    background: #2c2c2c;
    border-bottom: 2px solid #555;
    padding: 9px 0 0 3px;
}
.hthumb { width: 2807px; height: 18px; background: #6b6b6b; border-radius: 9px; }

/* sheet tabs */
.sheetbar {
    height: 50px;
    background: #333;
    display: flex;
    align-items: stretch;
    position: relative;
}
.nav-l, .nav-r { width: 0; height: 0; align-self: center; border-top: 10px solid transparent; border-bottom: 10px solid transparent; }
.nav-l { margin-left: 30px; border-right: 14px solid #6b6b6b; }
.nav-r { margin-left: 32px; border-left: 14px solid #6b6b6b; }
.navsep { width: 2px; height: 42px; background: #555; margin-left: 30px; }
.sheettabs {
    width: 356px;
    margin-left: -2px;
    background: #1f1f1f;
    display: flex;
    gap: 14px;
    padding: 4px 8px 6px;
}
.stab {
    display: flex;
    align-items: center;
    justify-content: center;
    font-size: 24px;
}
.events { width: 144px; background: #3470b8; color: #fff; }
.mdr { width: 182px; background: #d4803a; color: #000; }
.current {
    width: 174px;
    height: 44px;
    margin-top: -2px;
    border: 6px solid #fff;
    border-radius: 0 0 6px 6px;
    padding-top: 4px;
    background: linear-gradient(#f0f6f1, #b3dabb);
    color: #4a7f56;
}
.current b { font-weight: 600; }
.addsheet { width: 76px; text-align: center; color: #aaa; font-size: 40px; line-height: 46px; margin-left: 2px; }
.sheetbar .navsep:last-child { margin-left: 0; }

/* status bar */
.statusbar {
    height: 46px;
    background: linear-gradient(#474747, #3a3a3a);
    border-top: 1px solid #111;
    display: flex;
    align-items: center;
    font-size: 24px;
    color: #f0f0f0;
}
.ready { margin-left: 49px; width: 69px; }
.acc { margin-left: 10px; width: 2101px; white-space: nowrap; font-size: 23.7px; }
.views { display: flex; height: 46px; margin-left: 1px; }
.view { height: 46px; width: 71px; display: flex; align-items: center; justify-content: center; }
.view.on { background: #555; width: 74px; }
.zoomtrack {
    width: 200px;
    height: 12px;
    margin-left: 14px;
    background: #6f6f6f;
    border-radius: 6px;
    position: relative;
}
.knob {
    position: absolute;
    left: 84px;
    top: -16px;
    width: 32px;
    height: 44px;
    border-radius: 50%;
    background: #9f9f9f;
}
.pct { margin-left: 34px; }
```
